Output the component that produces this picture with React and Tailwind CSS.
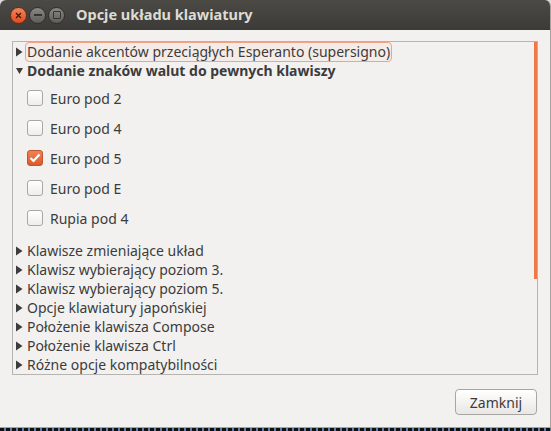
import React from 'react';

const font = { fontFamily: '"Noto Sans", "DejaVu Sans", sans-serif' };

function Arrow({ open }) {
  return (
    <svg width="7" height="10" viewBox="0 0 7 10" className="shrink-0">
      {open ? <path d="M0 2 L7 2 L3.5 8 Z" fill="#3c3c3c" /> : <path d="M0 0.5 L6.5 5 L0 9.5 Z" fill="#3c3c3c" />}
    </svg>
  );
}

function Check({ checked, label }) {
  return (
    <div className="flex items-center h-[30px] pl-[14px]">
      {checked ? (
        <span className="w-4 h-4 rounded-[3px] border border-[#c2552b] bg-gradient-to-b from-[#f08256] to-[#d95a2a] flex items-center justify-center">
          <svg width="12" height="10" viewBox="0 0 12 10">
            <path d="M1.5 5 L4.5 8 L10.5 1.5" stroke="#fff" strokeWidth="2.2" fill="none" />
          </svg>
        </span>
      ) : (
        <span className="w-4 h-4 rounded-[3px] border border-[#aaa7a2] bg-gradient-to-b from-[#ffffff] to-[#eeedeb]" />
      )}
      <span className="ml-[7px] text-[14px] text-[#3c3c3c]">{label}</span>
    </div>
  );
}

function Row({ label, bold, open, focus }) {
  return (
    <div className="flex items-center h-[19px] pl-[3px]">
      <Arrow open={open} />
      <span
        className={`ml-[2px] px-[1px] text-[14px] leading-[18px] text-[#3c3c3c] ${bold ? 'font-bold' : ''} ${
          focus ? 'border border-[#f3a283] bg-[#f6ece7] rounded-[4px]' : 'border border-transparent'
        }`}
      >
        {label}
      </span>
    </div>
  );
}

const rest = [
  'Klawisze zmieniające układ',
  'Klawisz wybierający poziom 3.',
  'Klawisz wybierający poziom 5.',
  'Opcje klawiatury japońskiej',
  'Położenie klawisza Compose',
  'Położenie klawisza Ctrl',
  'Różne opcje kompatybilności',
];

export default function App() {
  return (
    <div className="w-[551px] h-[431px] bg-[#dcdad6] overflow-hidden" style={font}>
      <div className="h-[428px] flex flex-col bg-[#f2f1f0] border-r border-[#a5a39f] border-b rounded-t-[6px] overflow-hidden">
        {/* title bar */}
        <div className="h-[30px] shrink-0 flex items-center bg-gradient-to-b from-[#4b4a45] to-[#3c3b37] pl-[10px]">
          <div className="flex items-center gap-[2px]">
            <span className="w-[17px] h-[17px] rounded-full bg-gradient-to-b from-[#f5835a] to-[#de4b1c] border border-[#6b2c17] flex items-center justify-center">
              <svg width="7" height="7" viewBox="0 0 7 7">
                <path d="M1 1 L6 6 M6 1 L1 6" stroke="#3a1a0e" strokeWidth="1.3" />
              </svg>
            </span>
            <span className="w-[17px] h-[17px] rounded-full bg-gradient-to-b from-[#8a8884] to-[#5e5d59] border border-[#2f2e2b] flex items-center justify-center">
              <span className="w-[8px] h-[2px] bg-[#35342f]" />
            </span>
            <span className="w-[17px] h-[17px] rounded-full bg-gradient-to-b from-[#8a8884] to-[#5e5d59] border border-[#2f2e2b] flex items-center justify-center">
              <span className="w-[8px] h-[8px] border-[1.5px] border-[#35342f] rounded-[1px]" />
            </span>
          </div>
          <span className="ml-[11px] text-[14.5px] font-bold text-[#dfdbd2]">Opcje układu klawiatury</span>
        </div>

        {/* body */}
        <div className="flex-1 flex flex-col px-[12px] pt-[11px]">
          <div className="h-[334px] border border-[#b6b4b0] flex">
            <div className="flex-1 flex flex-col">
              <Row label="Dodanie akcentów przeciągłych Esperanto (supersigno)" focus />
              <Row label="Dodanie znaków walut do pewnych klawiszy" bold open />
              <div className="pt-[3px] pb-[8px]">
                <Check label="Euro pod 2" />
                <Check label="Euro pod 4" />
                <Check label="Euro pod 5" checked />
                <Check label="Euro pod E" />
                <Check label="Rupia pod 4" />
              </div>
              {rest.map((r) => (
                <Row key={r} label={r} />
              ))}
            </div>
            <div className="w-[3px] h-[237px] bg-[#f07746]" />
          </div>
          <div className="flex justify-end mt-[14px] pr-[1px]">
            <button className="w-[82px] h-[26px] rounded-[4px] border border-[#a8a6a2] bg-gradient-to-b from-[#ffffff] to-[#e8e7e5] text-[14px] text-[#3c3c3c]">
              Zamknij
            </button>
          </div>
        </div>
      </div>
      <div className="h-[3px] bg-[repeating-linear-gradient(90deg,#111_0px,#111_4px,#5a7fa8_4px,#5a7fa8_6px)]" />
    </div>
  );
}
